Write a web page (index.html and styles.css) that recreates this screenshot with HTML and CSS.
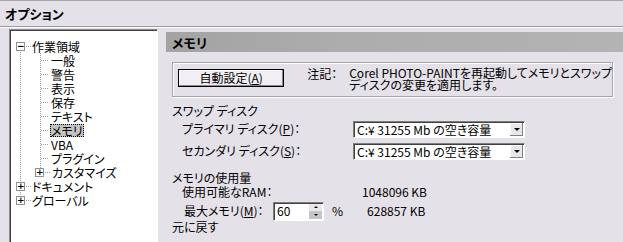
FILE: index.html
```html
<!DOCTYPE html>
<html lang="ja">
<head>
    <meta charset="UTF-8">
    <title>オプション</title>
    <link rel="stylesheet" href="styles.css">
</head>
<body>

    <div class="window">
        <div class="titlebar">オプション</div>

        <div class="body">
            <!-- category tree -->
            <div class="tree">
                <div class="roots">
                    <div class="node">
                        <div class="row"><span class="box">−</span><span class="dots"></span><span class="lbl">作業領域</span></div>
                        <div class="kids">
                            <div class="row"><span class="dots"></span><span class="lbl">一般</span></div>
                            <div class="row"><span class="dots"></span><span class="lbl">警告</span></div>
                            <div class="row"><span class="dots"></span><span class="lbl">表示</span></div>
                            <div class="row"><span class="dots"></span><span class="lbl">保存</span></div>
                            <div class="row"><span class="dots"></span><span class="lbl">テキスト</span></div>
                            <div class="row"><span class="dots"></span><span class="lbl selected">メモリ</span></div>
                            <div class="row"><span class="dots"></span><span class="lbl">VBA</span></div>
                            <div class="row"><span class="dots"></span><span class="lbl">プラグイン</span></div>
                            <div class="row sub"><span class="box">+</span><span class="dots"></span><span class="lbl">カスタマイズ</span></div>
                        </div>
                    </div>
                    <div class="row"><span class="box">+</span><span class="dots"></span><span class="lbl">ドキュメント</span></div>
                    <div class="row"><span class="box">+</span><span class="dots"></span><span class="lbl">グローバル</span></div>
                </div>
            </div>

            <!-- settings page -->
            <div class="panel">
                <div class="panel-head">メモリ</div>

                <div class="group">
                    <button class="btn">自動設定(<u>A</u>)</button>
                    <span class="note-label">注記：</span>
                    <p class="note-text">Corel PHOTO-PAINTを再起動してメモリとスワップ<br>ディスクの変更を適用します。</p>
                </div>

                <div class="section swap">スワップ ディスク</div>
                <div class="field">
                    <span class="field-label">プライマリ ディスク(<u>P</u>)：</span>
                    <div class="combo"><span class="combo-text">C:¥ 31255 Mb の空き容量</span><span class="combo-btn"><span class="tri"></span></span></div>
                </div>
                <div class="field">
                    <span class="field-label">セカンダリ ディスク(<u>S</u>)：</span>
                    <div class="combo"><span class="combo-text">C:¥ 31255 Mb の空き容量</span><span class="combo-btn"><span class="tri"></span></span></div>
                </div>

                <div class="section usage">メモリの使用量</div>
                <div class="field ram">
                    <span class="field-label wide">使用可能なRAM：</span>
                    <span class="value">1048096 KB</span>
                </div>
                <div class="field max">
                    <span class="field-label short">最大メモリ(<u>M</u>)：</span>
                    <div class="spin">
                        <span class="spin-text">60</span>
                        <span class="spin-btns"><span class="up"></span><span class="down"></span></span>
                    </div>
                    <span class="pct">%</span>
                    <span class="value">628857 KB</span>
                </div>
                <div class="section reset">元に戻す</div>
            </div>
        </div>
    </div>

</body>
</html>
```

FILE: styles.css
```css
body {
    margin: 0;
    padding: 0;
    font-family: "Noto Sans CJK JP", "Liberation Sans", sans-serif;
    font-size: 12px;
    line-height: 14px;
    font-feature-settings: "palt";
    color: #000;
    background: #e5e1e8;
    overflow: hidden;
}

.window {
    width: 623px;
    height: 242px;
    border-top: 1px solid #a9a5ad;
    box-sizing: border-box;
    overflow: hidden;
}

.titlebar {
    height: 25px;
    line-height: 26px;
    padding-left: 5px;
    font-weight: bold;
    font-size: 13px;
    border-bottom: 1px solid #9f9ba3;
    box-shadow: 0 1px 0 #fff;
}

.body {
    display: flex;
    padding: 2px 0 0 9px;
    gap: 8px;
}

/* Tree */
.tree {
    flex: none;
    width: 149px;
    height: 220px;
    background: #fff;
    border: 1px solid #8d8a91;
    border-right-color: #fff;
    border-bottom: none;
    box-shadow: inset 1px 1px 0 #404040;
    padding: 9px 0 0 6px;
    box-sizing: border-box;
}

.roots {
    background: repeating-linear-gradient(to bottom, #a0a0a0 0 1px, transparent 1px 2px) no-repeat;
    background-size: 1px 154px;
    background-position: 4px 7px;
}

.row {
    display: flex;
    align-items: center;
    height: 14px;
}

.box {
    width: 7px;
    height: 7px;
    border: 1px solid #919191;
    background: #fff;
    font-size: 9px;
    line-height: 7px;
    text-align: center;
    font-family: "DejaVu Sans", sans-serif;
    font-weight: bold;
    flex: none;
}

.dots {
    width: 5px;
    height: 1px;
    margin-left: 1px;
    background: repeating-linear-gradient(to right, #a0a0a0 0 1px, transparent 1px 2px);
    flex: none;
}

.lbl {
    padding: 0 1px;
    line-height: 13px;
    white-space: nowrap;
}

.kids {
    margin-left: 24px;
    background: repeating-linear-gradient(to bottom, #a0a0a0 0 1px, transparent 1px 2px) no-repeat;
    background-size: 1px 119px;
    background-position: 0 0;
}

.kids .row .dots {
    width: 8px;
    margin-left: 1px;
    margin-right: 1px;
}

.kids .row.sub {
    margin-left: -5px;
}

.kids .row.sub .dots {
    width: 5px;
}

.selected {
    background: #c3c3c3;
    outline: 1px dotted #000;
    outline-offset: -1px;
}

/* Panel */
.panel {
    flex: 1;
    min-width: 0;
    display: flex;
    flex-direction: column;
}

.panel-head {
    height: 20px;
    line-height: 21px;
    margin-top: 3px;
    padding-left: 6px;
    font-weight: bold;
    font-size: 13px;
    background: linear-gradient(to right, #a3a3a3, #adadad 40%, #b3b3b3);
}

.group {
    display: flex;
    align-items: flex-start;
    margin: 10px 10px 0 6px;
    height: 33px;
    border: 1px solid #a7a4aa;
    box-shadow: inset 1px 1px 0 #fff, 1px 1px 0 #fff;
    padding: 0 0 0 5px;
    white-space: nowrap;
}

.btn {
    margin-top: 6px;
    width: 111px;
    height: 18px;
    padding: 0;
    font-family: inherit;
    font-size: 12px;
    line-height: 16px;
    font-feature-settings: "palt";
    background: #f1eff3;
    border: 1px solid #000;
    box-shadow: inset -1px -1px 0 #8a878d, inset 1px 1px 0 #fff;
    color: #000;
}

.note-label {
    margin: 4px 0 0 23px;
    line-height: 13px;
}

.note-text {
    margin: 4px 0 0 12px;
    line-height: 12px;
}

.section {
    margin-left: 6px;
    height: 14px;
}

.section.swap {
    margin-top: 7px;
}

.section.usage {
    margin-top: 9px;
}

.section.reset {
    margin-top: -2px;
}

.field {
    display: flex;
    align-items: center;
    height: 22px;
    white-space: nowrap;
}

.field.ram {
    height: 14px;
}

.field.max {
    margin-top: 1px;
}

.field-label {
    flex: none;
    width: 187px;
    padding-left: 16px;
    box-sizing: border-box;
}

.field-label.wide {
    width: 196px;
}

.field-label.short {
    width: 107px;
    padding-left: 18px;
}

.combo {
    display: flex;
    align-items: center;
    width: 172px;
    height: 17px;
    background: #fff;
    border: 1px solid #7f7f7f;
    border-right-color: #fff;
    border-bottom-color: #fff;
    box-sizing: border-box;
    box-shadow: inset 1px 1px 0 #404040;
}

.combo-text {
    flex: 1;
    padding-left: 3px;
    line-height: 15px;
}

.combo-btn {
    width: 13px;
    height: 13px;
    margin-right: 1px;
    background: #e8e6ea;
    box-shadow: inset -1px -1px 0 #808080, inset 1px 1px 0 #fff;
    display: flex;
    align-items: center;
    justify-content: center;
}

.tri {
    width: 0;
    height: 0;
    border-left: 3px solid transparent;
    border-right: 3px solid transparent;
    border-top: 3px solid #000;
}

.spin {
    display: flex;
    flex: none;
    width: 51px;
    height: 19px;
    background: #fff;
    border: 1px solid #7f7f7f;
    border-right-color: #fff;
    border-bottom-color: #fff;
    box-sizing: border-box;
    box-shadow: inset 1px 1px 0 #404040;
}

.spin-text {
    flex: 1;
    padding-left: 3px;
    line-height: 15px;
}

.spin-btns {
    width: 13px;
    display: flex;
    flex-direction: column;
    margin: 1px 1px 1px 0;
    background: #c6c4c8;
}

.spin-btns span {
    flex: 1;
    display: flex;
    align-items: center;
    justify-content: center;
}

.spin-btns .up {
    background: #e9e7eb;
}

.spin-btns .up::before {
    content: "";
    border-left: 2px solid transparent;
    border-right: 2px solid transparent;
    border-bottom: 2px solid #000;
}

.spin-btns .down::before {
    content: "";
    border-left: 2px solid transparent;
    border-right: 2px solid transparent;
    border-top: 2px solid #000;
}

.pct {
    margin-left: 8px;
}

.pct + .value {
    margin-left: 24px;
}
```
